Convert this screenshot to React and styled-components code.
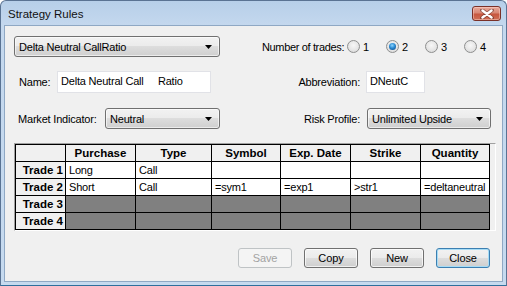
import React from 'react';
import styled, { createGlobalStyle } from 'styled-components';

const Global = createGlobalStyle`
  html, body { margin: 0; padding: 0; background: #ffffff; }
  body {
    font-family: "Liberation Sans", Arial, sans-serif;
    font-size: 11px;
    color: #000;
  }
`;

const Window = styled.div`
  width: 507px;
  height: 286px;
  box-sizing: border-box;
  display: flex;
  flex-direction: column;
  background: linear-gradient(#b7cfe9, #c4d8ee 25px, #c6daef);
  border: 1px solid #5a7393;
  border-bottom-color: #2f6f9c;
  border-radius: 6px 6px 0 0;
  padding: 0 3px 3px 3px;
`;

const TitleBar = styled.div`
  height: 24px;
  display: flex;
  justify-content: space-between;
  align-items: flex-start;
  padding-left: 4px;
`;

const Title = styled.div`
  font-family: "Liberation Sans", Arial, sans-serif;
  font-size: 11.5px;
  line-height: 26px;
  color: #111;
`;

const CloseBox = styled.div`
  margin-top: 5px;
  margin-right: 2px;
  width: 29px;
  height: 15px;
  box-sizing: border-box;
  border: 1px solid #7a3128;
  border-radius: 3px;
  background: linear-gradient(#e9a99b 0%, #d88774 45%, #c7573f 55%, #cf6f56 100%);
  box-shadow: inset 0 0 0 1px rgba(255, 220, 210, 0.45);
  display: flex;
  align-items: center;
  justify-content: center;
`;

const Content = styled.div`
  flex: 1;
  border: 1px solid #8fa8c4;
  background: #f0f0f0;
  padding: 10px 0 0 9px;
  display: flex;
  flex-direction: column;
`;

const Row = styled.div`
  display: flex;
  align-items: center;
  height: ${(p) => p.$h}px;
  margin-top: ${(p) => p.$mt || 0}px;
`;

const LeftGroup = styled.div`
  width: 206px;
  display: flex;
  align-items: center;
`;

const RightGroup = styled.div`
  margin-left: 42px;
  display: flex;
  align-items: center;
`;

const Label = styled.div`
  box-sizing: border-box;
  width: ${(p) => p.$w}px;
  padding-left: ${(p) => p.$pl || 0}px;
  padding-right: ${(p) => p.$pr || 0}px;
  text-align: ${(p) => p.$align || 'left'};
  letter-spacing: ${(p) => p.$ls ?? -0.2}px;
  white-space: nowrap;
`;

const Combo = styled.div`
  box-sizing: border-box;
  width: ${(p) => p.$w}px;
  height: 21px;
  border: 1px solid #707070;
  border-radius: 3px;
  background: linear-gradient(#f2f2f2 0%, #ebebeb 50%, #dddddd 50%, #cfcfcf 100%);
  box-shadow: inset 0 0 0 1px rgba(255, 255, 255, 0.6);
  display: flex;
  align-items: center;
  justify-content: space-between;
  padding: 0 7px 0 4px;
  letter-spacing: -0.2px;
`;

const TextBox = styled.div`
  box-sizing: border-box;
  width: ${(p) => p.$w}px;
  height: 22px;
  background: #fff;
  border: 1px solid #e1e2e7;
  padding: 3px 0 0 3px;
  white-space: pre;
  letter-spacing: -0.2px;
`;

const RadioOption = styled.div`
  width: ${(p) => p.$w || 39}px;
  display: flex;
  align-items: center;
  gap: 3px;
`;

const RadioCircle = styled.div`
  position: relative;
  width: 13px;
  height: 13px;
  box-sizing: border-box;
  border-radius: 50%;
  border: 1px solid #8e8f8f;
  background: radial-gradient(circle at 50% 40%, #f7f7f7 0%, #e6e6e6 55%, #d2d2d2 100%);
  &::after {
    content: '';
    display: ${(p) => (p.$checked ? 'block' : 'none')};
    position: absolute;
    left: 2px;
    top: 2px;
    width: 7px;
    height: 7px;
    border-radius: 50%;
    background: radial-gradient(circle at 45% 35%, #8fd6ff 0%, #2a8ad2 45%, #0c3d78 100%);
  }
`;

const GridFrame = styled.div`
  margin-top: 14px;
  width: 482px;
  box-sizing: border-box;
  border: 1px solid;
  border-color: #a0a0a0 #ffffff #ffffff #a0a0a0;
  background: #f0f0f0;
  display: flex;
`;

const Grid = styled.div`
  display: grid;
  grid-template-columns: 49px 69px 75px 68px 69px 69px 68px;
  grid-auto-rows: 16px;
  gap: 1px;
  padding: 1px;
  background: #000;
`;

const HeadCell = styled.div`
  background: #f0f0f0;
  font-weight: bold;
  font-size: 11.5px;
  line-height: 16px;
  text-align: ${(p) => (p.$row ? 'right' : 'center')};
  padding-right: ${(p) => (p.$row ? 2 : 0)}px;
  white-space: nowrap;
`;

const Cell = styled.div`
  background: ${(p) => (p.$off ? '#808080' : '#ffffff')};
  line-height: 16px;
  padding-left: 3px;
  letter-spacing: -0.2px;
  white-space: nowrap;
  overflow: hidden;
`;

const ButtonBar = styled.div`
  margin-top: 17px;
  display: flex;
  justify-content: flex-end;
  gap: 12px;
  padding-right: 12px;
`;

const Button = styled.button`
  width: 54px;
  height: 20px;
  box-sizing: border-box;
  padding: 0;
  border-radius: 3px;
  font-family: "Liberation Sans", Arial, sans-serif;
  font-size: 11px;
  letter-spacing: -0.1px;
  color: ${(p) => (p.disabled ? '#a3a3a3' : '#000')};
  border: 1px solid ${(p) => (p.disabled ? '#bfc3c5' : p.$default ? '#3c7fb1' : '#707070')};
  background: ${(p) =>
    p.disabled
      ? '#f4f4f4'
      : 'linear-gradient(#f2f2f2 0%, #ebebeb 50%, #dddddd 50%, #cfcfcf 100%)'};
  box-shadow: inset 0 0 0 1px
    ${(p) => (p.disabled ? 'transparent' : p.$default ? '#a6dcf6' : 'rgba(255,255,255,0.7)')};
`;

const Arrow = () => (
  <svg width="7" height="4" viewBox="0 0 7 4">
    <polygon points="0,0 7,0 3.5,4" fill="#000" />
  </svg>
);

const CloseGlyph = () => (
  <svg width="14" height="10" viewBox="0 0 14 10">
    <path
      d="M2 1 L12 9 M12 1 L2 9"
      stroke="#5a2a22"
      strokeWidth="4"
      strokeLinecap="round"
      opacity="0.55"
    />
    <path d="M2.5 1.5 L11.5 8.5 M11.5 1.5 L2.5 8.5" stroke="#ffffff" strokeWidth="2.4" strokeLinecap="round" />
  </svg>
);

const headers = ['Purchase', 'Type', 'Symbol', 'Exp. Date', 'Strike', 'Quantity'];
const trades = [
  { name: 'Trade 1', cells: ['Long', 'Call', '', '', '', ''] },
  { name: 'Trade 2', cells: ['Short', 'Call', '=sym1', '=exp1', '>str1', '=deltaneutral'] },
  { name: 'Trade 3', off: true, cells: ['', '', '', '', '', ''] },
  { name: 'Trade 4', off: true, cells: ['', '', '', '', '', ''] },
];

export default function App() {
  return (
    <>
      <Global />
      <Window>
        <TitleBar>
          <Title>Strategy Rules</Title>
          <CloseBox>
            <CloseGlyph />
          </CloseBox>
        </TitleBar>
        <Content>
          <Row $h={21}>
            <LeftGroup>
              <Combo $w={206}>
                <span>Delta Neutral CallRatio</span>
                <Arrow />
              </Combo>
            </LeftGroup>
            <RightGroup>
              <Label $w={85} $ls={-0.35}>Number of trades:</Label>
              {[1, 2, 3, 4].map((n) => (
                <RadioOption key={n} $w={n === 4 ? 24 : 39}>
                  <RadioCircle $checked={n === 2} />
                  <span>{n}</span>
                </RadioOption>
              ))}
            </RightGroup>
          </Row>
          <Row $h={22} $mt={14}>
            <LeftGroup>
              <Label $w={43} $pl={5}>Name:</Label>
              <TextBox $w={154}>{'Delta Neutral Call     Ratio'}</TextBox>
            </LeftGroup>
            <RightGroup>
              <Label $w={104} $pr={6} $align="right">Abbreviation:</Label>
              <TextBox $w={59}>DNeutC</TextBox>
            </RightGroup>
          </Row>
          <Row $h={21} $mt={15}>
            <LeftGroup>
              <Label $w={91} $pl={4}>Market Indicator:</Label>
              <Combo $w={115}>
                <span>Neutral</span>
                <Arrow />
              </Combo>
            </LeftGroup>
            <RightGroup>
              <Label $w={105} $pr={7} $align="right">Risk Profile:</Label>
              <Combo $w={124}>
                <span>Unlimited Upside</span>
                <Arrow />
              </Combo>
            </RightGroup>
          </Row>
          <GridFrame>
            <Grid>
              <HeadCell />
              {headers.map((h) => (
                <HeadCell key={h}>{h}</HeadCell>
              ))}
              {trades.map((t) => (
                <React.Fragment key={t.name}>
                  <HeadCell $row>{t.name}</HeadCell>
                  {t.cells.map((c, i) => (
                    <Cell key={i} $off={t.off}>
                      {c}
                    </Cell>
                  ))}
                </React.Fragment>
              ))}
            </Grid>
          </GridFrame>
          <ButtonBar>
            <Button disabled>Save</Button>
            <Button>Copy</Button>
            <Button>New</Button>
            <Button $default>Close</Button>
          </ButtonBar>
        </Content>
      </Window>
    </>
  );
}
